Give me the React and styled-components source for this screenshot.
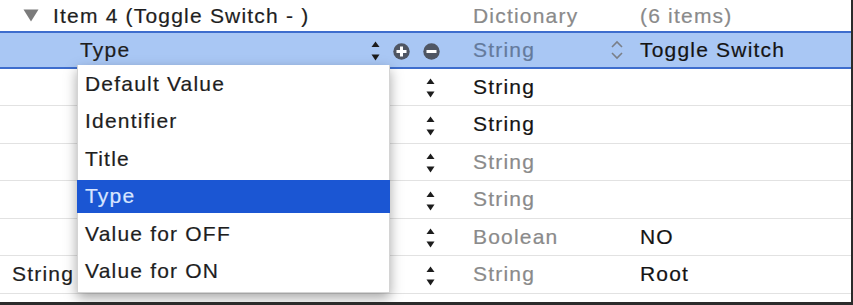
import React from "react";
import styled, { createGlobalStyle } from "styled-components";

const GlobalStyle = createGlobalStyle`
  html, body {
    margin: 0;
    padding: 0;
    background: #ffffff;
    overflow: hidden;
  }
  body {
    font-family: "Liberation Sans", Arial, sans-serif;
  }
`;

const rows = [
  { type: "String", dark: true },
  { type: "String", dark: true },
  { type: "String" },
  { type: "String" },
  { type: "Boolean", value: "NO" },
  { key: "String", type: "String", value: "Root" },
];

const menuItems = [
  "Default Value",
  "Identifier",
  "Title",
  "Type",
  "Value for OFF",
  "Value for ON",
];

function Stepper() {
  return (
    <svg width="9" height="20" viewBox="0 0 9 20">
      <path d="M4.5 0.5 L8.5 6 L0.5 6 Z" fill="#1c1c1c" />
      <path d="M0.5 13.5 L8.5 13.5 L4.5 19.5 Z" fill="#1c1c1c" />
    </svg>
  );
}

function RoundButton({ minus }) {
  return (
    <svg width="17" height="17" viewBox="0 0 17 17">
      <circle cx="8.5" cy="8.5" r="8.2" fill="#4f5663" />
      <rect x="3.5" y="7" width="10" height="3" fill="#ffffff" />
      {!minus && <rect x="7" y="3.5" width="3" height="10" fill="#ffffff" />}
    </svg>
  );
}

function Chevrons() {
  return (
    <svg width="14" height="22" viewBox="0 0 14 22">
      <polyline
        points="2,8 7,3 12,8"
        fill="none"
        stroke="#7a7f88"
        strokeWidth="1.6"
      />
      <polyline
        points="2,14 7,19 12,14"
        fill="none"
        stroke="#7a7f88"
        strokeWidth="1.6"
      />
    </svg>
  );
}

function Disclosure() {
  return (
    <svg width="16" height="13" viewBox="0 0 16 13">
      <path d="M0.5 0.5 L15.5 0.5 L8 12.5 Z" fill="#7b7b7b" />
    </svg>
  );
}

function App() {
  return (
    <>
      <GlobalStyle />
      <Frame>
        <Row $height={31} $plain>
          <KeyCell>
            <Label $indent={23}>
              <Disclosure />
              <Text>Item 4 (Toggle Switch - )</Text>
            </Label>
          </KeyCell>
          <TypeText $tone="gray">Dictionary</TypeText>
          <ValueCell>
            <ValueText $tone="gray">(6 items)</ValueText>
          </ValueCell>
        </Row>
        <SelectedRow>
          <KeyCell>
            <Label $indent={80}>
              <Text>Type</Text>
            </Label>
            <Controls $right={33}>
              <Stepper />
              <RoundButton />
              <RoundButton minus />
            </Controls>
          </KeyCell>
          <TypeText $tone="blue">String</TypeText>
          <ValueCell $chevron>
            <Chevrons />
            <ValueText>Toggle Switch</ValueText>
          </ValueCell>
        </SelectedRow>
        {rows.map((r, i) => (
          <Row key={i}>
            <KeyCell>
              <Label $indent={12}>
                {r.key && <Text>{r.key}</Text>}
              </Label>
              <Controls $right={38}>
                <Stepper />
              </Controls>
            </KeyCell>
            <TypeText $tone={r.dark ? "dark" : "gray"}>{r.type}</TypeText>
            <ValueCell>
              {r.value && <ValueText>{r.value}</ValueText>}
            </ValueCell>
          </Row>
        ))}
        <Filler />
        <Menu>
          {menuItems.map((m) => (
            <MenuItem key={m}>
              <MenuLabel $active={m === "Type"}>{m}</MenuLabel>
            </MenuItem>
          ))}
        </Menu>
      </Frame>
    </>
  );
}

export default App;

const Frame = styled.div`
  position: relative;
  width: 853px;
  height: 305px;
  box-sizing: border-box;
  border-right: 2px solid #2b2b2b;
  border-bottom: 3px solid #2b2b2b;
  display: flex;
  flex-direction: column;
  overflow: hidden;
  font-size: 21px;
  letter-spacing: 1.2px;
  color: #1a1a1a;
  -webkit-text-stroke: 0.2px currentColor;
`;

const Row = styled.div`
  display: grid;
  grid-template-columns: 473px 137px 1fr;
  align-items: center;
  flex: none;
  height: ${(p) => p.$height || 37.5}px;
  box-sizing: border-box;
  border-bottom: ${(p) => (p.$plain ? "none" : "1px solid #e2e2e2")};
`;

const SelectedRow = styled(Row)`
  height: 37.5px;
  background: #a9c7f4;
  border-top: 2px solid #3e6dcd;
  border-bottom: 2px solid #3e6dcd;
`;

const Filler = styled.div`
  flex: 1;
`;

const KeyCell = styled.div`
  display: flex;
  align-items: center;
  height: 100%;
`;

const Label = styled.div`
  flex: 1;
  display: flex;
  align-items: center;
  gap: 14px;
  padding-left: ${(p) => p.$indent}px;
  white-space: nowrap;
`;

const Text = styled.span`
  color: #1e1e1e;
`;

const Controls = styled.div`
  display: flex;
  align-items: center;
  gap: 13px;
  margin-right: ${(p) => p.$right}px;
  padding-top: 3px;
`;

const tones = {
  gray: "#8a8a8a",
  dark: "#141414",
  blue: "#647a9c",
};

const TypeText = styled.div`
  color: ${(p) => tones[p.$tone]};
  white-space: nowrap;
`;

const ValueCell = styled.div`
  display: flex;
  align-items: center;
  gap: 16px;
  padding-left: ${(p) => (p.$chevron ? 0 : 30)}px;
  white-space: nowrap;
`;

const ValueText = styled.span`
  color: ${(p) => (p.$tone ? tones[p.$tone] : "#141414")};
`;

const Menu = styled.div`
  position: absolute;
  left: 77px;
  top: 65px;
  width: 313px;
  padding-bottom: 2px;
  background: #ffffff;
  border: 1px solid #d4d4d4;
  border-top: none;
  box-sizing: border-box;
  box-shadow: 0 5px 12px rgba(0, 0, 0, 0.35);
`;

const MenuItem = styled.div`
  height: 37.5px;
  box-sizing: border-box;
  padding: 2px 0;
  display: flex;
  margin: 0 -1px;
`;

const MenuLabel = styled.div`
  flex: 1;
  display: flex;
  align-items: center;
  padding-left: 8px;
  white-space: nowrap;
  color: ${(p) => (p.$active ? "#d8e5ff" : "#1e1e1e")};
  background: ${(p) => (p.$active ? "#1b56d3" : "transparent")};
`;
